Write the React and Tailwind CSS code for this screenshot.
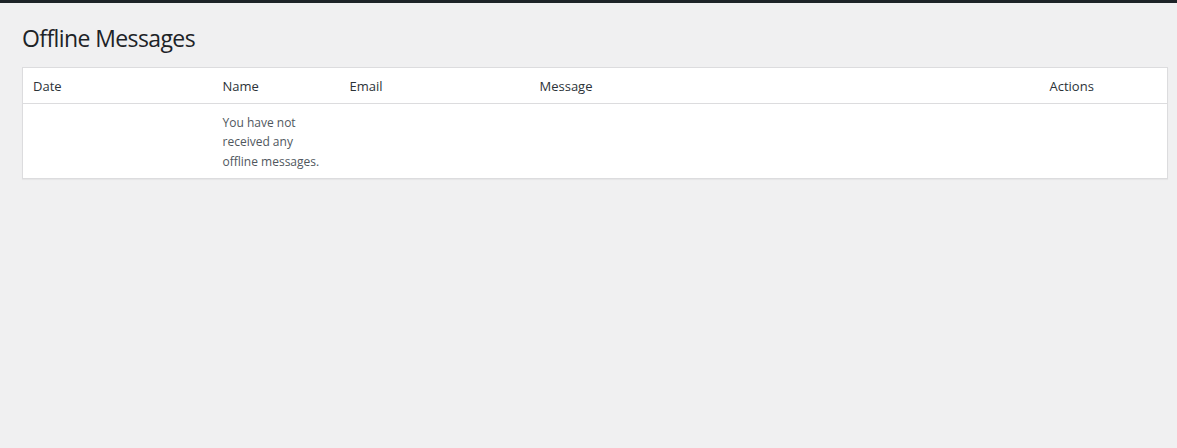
import React from 'react';

const columns = [
  { label: 'Date', width: 'w-[190px]' },
  { label: 'Name', width: 'w-[127px]' },
  { label: 'Email', width: 'w-[190px]' },
  { label: 'Message', width: 'w-[510px]' },
  { label: 'Actions', width: '' },
];

const App = () => {
  return (
    <div className="min-h-screen bg-[#f0f0f1] font-['Open_Sans','Noto_Sans',sans-serif]">
      <div className="h-[3px] bg-[#1d2327]" />
      <div className="pl-[22px] pr-[9px]">
        <h1 className="pt-[20px] pb-[14px] text-[23px] leading-[30px] font-normal text-[#1d2327] tracking-[-0.6px]">
          Offline Messages
        </h1>
        <table className="w-full table-fixed border-collapse bg-white border border-[#dcdcde] shadow-[0_1px_1px_rgba(0,0,0,0.04)]">
          <thead>
            <tr className="border-b border-[#dcdcde]">
              {columns.map((col) => (
                <th
                  key={col.label}
                  className={`${col.width} px-[10px] pt-[9px] pb-[6px] text-left text-[13px] leading-[19.5px] font-normal text-[#2c3338]`}
                >
                  {col.label}
                </th>
              ))}
            </tr>
          </thead>
          <tbody>
            <tr>
              <td className="px-[10px] pt-[9px] pb-[7px]" />
              <td className="px-[10px] pt-[9px] pb-[7px] text-[12px] leading-[19.5px] text-[#50575e] align-top">
                You have not received any offline messages.
              </td>
              <td className="px-[10px] pt-[9px] pb-[7px]" />
              <td className="px-[10px] pt-[9px] pb-[7px]" />
              <td className="px-[10px] pt-[9px] pb-[7px]" />
            </tr>
          </tbody>
        </table>
      </div>
    </div>
  );
};

export default App;
